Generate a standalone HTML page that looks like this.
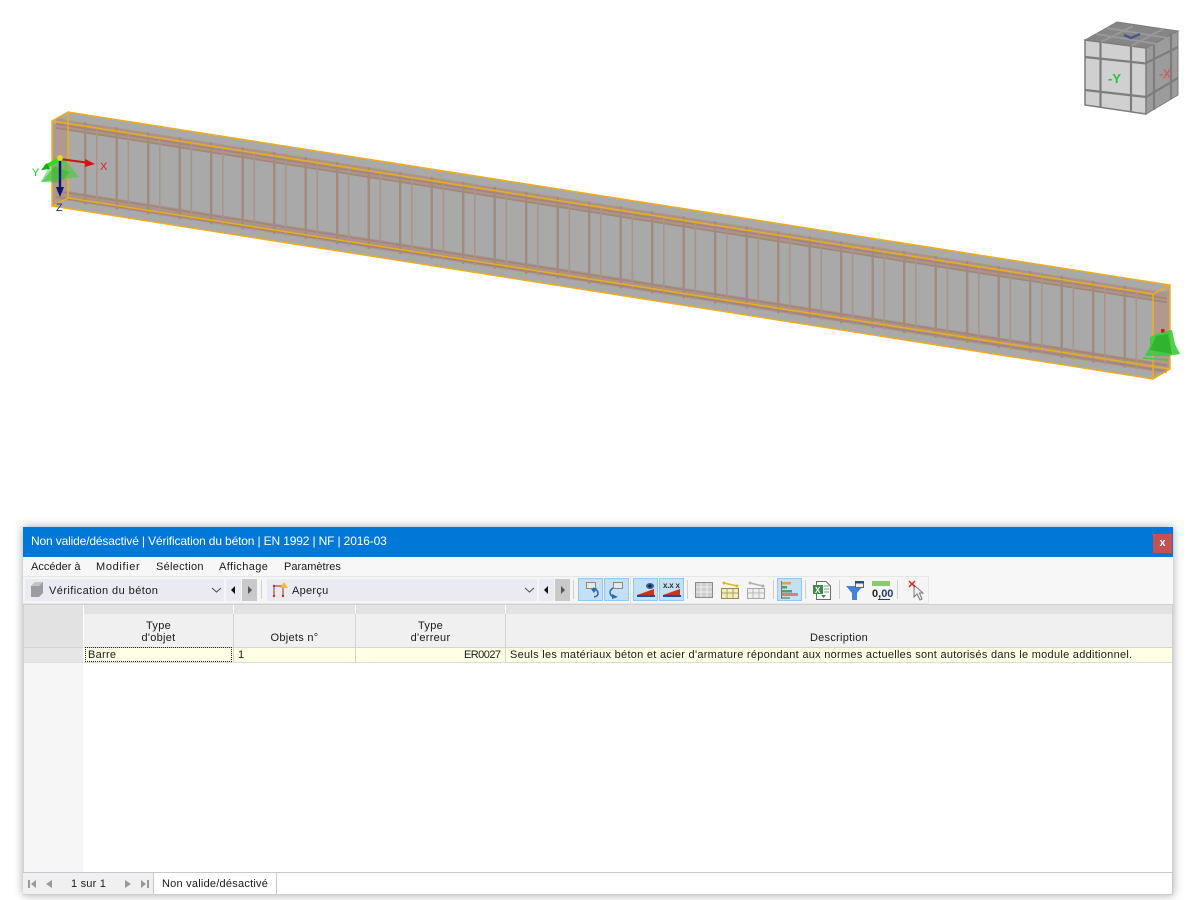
<!DOCTYPE html>
<html><head><meta charset="utf-8"><style>
html,body{margin:0;padding:0;width:1200px;height:900px;overflow:hidden;background:#fff;font-family:"Liberation Sans",sans-serif;color:#1a1a1a}
div{box-sizing:border-box}
.a{position:absolute}
.t{position:absolute;white-space:nowrap;font-size:11px;line-height:13px;letter-spacing:.28px}
.c{text-align:center}
svg{position:absolute;left:0;top:0}
</style></head><body>

<svg width="1200" height="520" viewBox="0 0 1200 520">
<defs>
<pattern id="st" patternUnits="userSpaceOnUse" x="84" y="0" width="31.5" height="520">
<rect x="0" y="0" width="2.4" height="520" fill="#a38a7f"/>
<rect x="12" y="0" width="1.6" height="520" fill="#a8958c"/>
</pattern>
<clipPath id="cp"><polygon points="70,120 1152,290 1152,372 70,202"/></clipPath>
</defs>
<polygon points="52,121 68,112 1170,285 1170,369 1153,379 52,206" fill="#a9a9a9"/>
<polygon points="53,124 68,122 68,198 53,205" fill="#b09a90"/>
<polygon points="1154,295 1169,290 1169,368 1154,376" fill="#b09a90"/>
<!-- rebar bands -->
<g fill="none" stroke-linecap="butt">
<path d="M56,123 L1167,297.500" stroke="#ad9488" stroke-width="9.500"/>
<path d="M56,124 L1167,298.500" stroke="#a08578" stroke-width="1.500"/>
<path d="M56,128 L1167,302.500" stroke="#a08578" stroke-width="1.500"/>
<path d="M56,194 L1167,368.500" stroke="#ad9488" stroke-width="9.500"/>
<path d="M56,191 L1167,365.500" stroke="#a08578" stroke-width="1.500"/>
<path d="M56,197 L1167,371.500" stroke="#a08578" stroke-width="1.500"/>
</g>
<rect x="0" y="100" width="1200" height="300" fill="url(#st)" clip-path="url(#cp)"/>
<!-- box edges -->
<g fill="none" stroke="#f0ad18" stroke-width="1.400">
<path d="M52,121 L68,112 L1170,285 L1170,369 L1153,379 L52,206 Z"/>
<path d="M52,121 L1153,294 L1153,379"/>
<path d="M1153,294 L1170,285"/>
<path d="M68,112 L68,198 L1170,369"/>
<path d="M68,198 L52,206"/>
</g>
<!-- left support -->
<polygon points="63,157 41,182 79,177" fill="#45cc45" opacity=".65"/>
<polygon points="50,165 41,182 60,183 70,172" fill="#2fb52f" opacity=".45"/>
<!-- axes -->
<path d="M60,159 L90,163" stroke="#cc1414" stroke-width="2"/>
<polygon points="85,159 95,164 85,167" fill="#d81212"/>
<path d="M60,159 L45,167" stroke="#22e022" stroke-width="4"/>
<polygon points="41,170 47,163 50,169" fill="#11aa11"/>
<path d="M60,160 L60,190" stroke="#10107a" stroke-width="2.400"/>
<polygon points="56,187 64,187 60,197" fill="#10107a"/>
<circle cx="60" cy="158" r="3" fill="#e8d820"/>
<text x="100" y="170" font-family="Liberation Sans" font-size="11" fill="#e02020">X</text>
<text x="32" y="176" font-family="Liberation Sans" font-size="11" fill="#20c030">Y</text>
<text x="56" y="211" font-family="Liberation Sans" font-size="11" fill="#2030a0">Z</text>
<!-- right support -->
<polygon points="1161,332 1172,330 1175,344 1180,354 1168,356 1145,356 1150,346 1150,337" fill="#3ccc3c" opacity=".9"/>
<polygon points="1156,336 1150,350 1172,354 1168,334" fill="#26ad26" opacity=".7"/>
<path d="M1143,358 L1168,360" stroke="#3ccc3c" stroke-width="1.500"/>
<rect x="1161" y="329" width="3.500" height="3.500" fill="#e81010"/>
<!-- cube -->
<polygon points="1085,40 1117,22 1178,31 1146,48" fill="#868686" stroke="#7c7c7c"/>
<polygon points="1146,48 1178,31 1178,95 1146,114" fill="#9c9c9c" stroke="#7c7c7c"/>
<polygon points="1085,40 1146,48 1146,114 1085,105" fill="#d0d0d0" stroke="#7c7c7c" stroke-width="1.500"/>
<g fill="none" stroke="#7d7d7d" stroke-width="2.200">
<path d="M1100.500,42 V107.500 M1131,46 V112"/>
<path d="M1085,57 L1146,63.500 M1085,90 L1146,97"/>
<path d="M1154,44 V110 M1171,35 V99"/>
<path d="M1146,63 L1178,47 M1146,97 L1178,78"/>
</g>
<g fill="none" stroke="#9a9a9a" stroke-width="1.800">
<path d="M1101,42 L1133,26 M1131,46 L1163,29"/>
<path d="M1096,34 L1157,44 M1107,28 L1168,38"/>
</g>
<text x="1108" y="83" font-family="Liberation Sans" font-size="13" font-weight="bold" fill="#2cc040">-Y</text>
<text x="1159" y="78" font-family="Liberation Sans" font-size="12" font-weight="bold" fill="#c86060">-X</text>
<path d="M1124,35 L1131,38 L1140,34" stroke="#4a5590" stroke-width="2.500" fill="none"/>
</svg>

<!-- window -->
<div class="a" style="left:23px;top:527px;width:1150px;height:368px;background:#fff;box-shadow:0 0 9px rgba(0,0,0,.35)"></div>
<div class="a" style="left:23px;top:527px;width:1150px;height:30px;background:#0078d7"></div>
<div class="t" style="left:31px;top:535px;color:#fff;font-size:12px;letter-spacing:-.15px">Non valide/désactivé | Vérification du béton | EN 1992 | NF | 2016-03</div>
<div class="a" style="left:1153px;top:534px;width:19px;height:19px;background:#c75050;color:#fff;font-size:11px;line-height:19px;text-align:center;font-weight:bold">x</div>
<div class="a" style="left:23px;top:557px;width:1150px;height:47px;background:#f7f7f7"></div>
<div class="t" style="left:31px;top:561px;letter-spacing:0">Accéder à</div>
<div class="t" style="left:96px;top:561px;letter-spacing:.65px">Modifier</div>
<div class="t" style="left:156px;top:561px">Sélection</div>
<div class="t" style="left:219px;top:561px;letter-spacing:.4px">Affichage</div>
<div class="t" style="left:284px;top:561px;letter-spacing:0">Paramètres</div>

<!-- toolbar -->
<div class="a" style="left:23px;top:576px;width:906px;height:28px;border:1px solid #e6e6e6;border-left:0;background:#f5f5f5"></div>
<div class="a" style="left:25px;top:579px;width:199px;height:22px;background:#e9eaf2"></div>
<div class="a" style="left:226px;top:579px;width:15px;height:22px;background:#e9eaf2"></div>
<div class="a" style="left:242px;top:579px;width:15px;height:22px;background:#c9c9c9"></div>
<div class="a" style="left:261px;top:580px;width:1px;height:19px;background:#cfcfcf"></div>
<div class="a" style="left:267px;top:579px;width:270px;height:22px;background:#e9eaf2"></div>
<div class="a" style="left:539px;top:579px;width:15px;height:22px;background:#e9eaf2"></div>
<div class="a" style="left:555px;top:579px;width:15px;height:22px;background:#c9c9c9"></div>
<div class="a" style="left:573px;top:580px;width:1px;height:19px;background:#cfcfcf"></div>
<div class="a" style="left:630px;top:577px;width:1px;height:26px;background:#dcdcdc"></div>
<div class="a" style="left:687px;top:580px;width:1px;height:19px;background:#cfcfcf"></div>
<div class="a" style="left:773px;top:580px;width:1px;height:19px;background:#cfcfcf"></div>
<div class="a" style="left:805px;top:580px;width:1px;height:19px;background:#cfcfcf"></div>
<div class="a" style="left:839px;top:580px;width:1px;height:19px;background:#cfcfcf"></div>
<div class="a" style="left:897px;top:580px;width:1px;height:19px;background:#cfcfcf"></div>
<div class="a" style="left:578px;top:578px;width:25px;height:23px;background:#c4e0f8;border:1px solid #90c8f5"></div>
<div class="a" style="left:604px;top:578px;width:25px;height:23px;background:#c4e0f8;border:1px solid #90c8f5"></div>
<div class="a" style="left:633px;top:578px;width:25px;height:23px;background:#c4e0f8;border:1px solid #90c8f5"></div>
<div class="a" style="left:659px;top:578px;width:25px;height:23px;background:#c4e0f8;border:1px solid #90c8f5"></div>
<div class="a" style="left:777px;top:578px;width:25px;height:23px;background:#c4e0f8;border:1px solid #90c8f5"></div>
<div class="t" style="left:49px;top:585px;letter-spacing:.43px">Vérification du béton</div>
<div class="t" style="left:292px;top:585px">Aperçu</div>

<svg width="1200" height="900" viewBox="0 0 1200 900" style="pointer-events:none">
<!-- combo1 icon -->
<polygon points="31,586 35,582 43,582 43,593 39,597 31,597" fill="#9c9c9c"/>
<polygon points="31,586 35,582 43,582 39,586" fill="#c4c4c4"/>
<!-- chevrons and arrows -->
<path d="M212,588 L216.500,592 L221,588" fill="none" stroke="#555" stroke-width="1.100"/>
<path d="M525,588 L529.500,592 L534,588" fill="none" stroke="#555" stroke-width="1.100"/>
<polygon points="235,586 231,590 235,594" fill="#111"/>
<polygon points="248,586 252,590 248,594" fill="#555"/>
<polygon points="548,586 544,590 548,594" fill="#111"/>
<polygon points="561,586 565,590 561,594" fill="#555"/>
<!-- aperçu icon -->
<path d="M274,596 V586 H283 V596" fill="none" stroke="#8a5a50" stroke-width="1.200"/>
<circle cx="274" cy="586" r="1.200" fill="#c03020"/><circle cx="274" cy="596" r="1.200" fill="#c03020"/><circle cx="283" cy="596" r="1.200" fill="#c03020"/>
<polygon points="280,588 284,582 288,588" fill="#f0c020"/>
<!-- blue button icons -->
<rect x="586.500" y="582.500" width="9" height="6" fill="#e8e8e8" stroke="#888"/>
<path d="M593,588 C600,591 599,596 594,597" fill="none" stroke="#2a6aa8" stroke-width="1.600"/>
<polygon points="591,589 597,588 594,593" fill="#2a6aa8"/>
<rect x="613.500" y="582.500" width="9" height="6" fill="#e8e8e8" stroke="#888"/>
<path d="M613,588 C608,591 610,596 614,597" fill="none" stroke="#2a6aa8" stroke-width="1.600"/>
<polygon points="612,594 618,597 612,599" fill="#2a6aa8"/>
<polygon points="637,595 654,589 654,595" fill="#d03020"/>
<rect x="637" y="595" width="18" height="2" fill="#1e4f96"/>
<ellipse cx="650" cy="586" rx="4" ry="3" fill="#2a5fa8"/>
<circle cx="650" cy="586" r="1.500" fill="#222"/>
<polygon points="663,595 680,589 680,595" fill="#d03020"/>
<rect x="663" y="595" width="18" height="2" fill="#1e4f96"/>
<text x="663" y="588" font-family="Liberation Sans" font-size="8" font-weight="bold" fill="#333" textLength="17" lengthAdjust="spacing">x.x x</text>
<!-- table icons -->
<g stroke="#8a8a8a" fill="#cfcfcf">
<rect x="695.500" y="582.500" width="17" height="15"/>
<path d="M696,587 H712 M696,592 H712 M701,583 V597 M707,583 V597" fill="none" stroke="#eee"/>
<rect x="721.500" y="588.500" width="17" height="10" fill="#f5eeb0" stroke="#8a8a6a"/>
<path d="M722,593 H738 M727,589 V598 M733,589 V598" fill="none" stroke="#a8a070"/>
<rect x="747.500" y="588.500" width="17" height="10" fill="#eeeeee" stroke="#a8a8a8"/>
<path d="M748,593 H764 M753,589 V598 M759,589 V598" fill="none" stroke="#b8b8b8"/>
</g>
<path d="M724,583 L737,586" stroke="#e4b818" stroke-width="1.500"/>
<circle cx="724" cy="583" r="1.500" fill="#e4b818"/><circle cx="737" cy="586" r="1.500" fill="#e4b818"/>
<path d="M750,583 L763,586" stroke="#b0b0b0" stroke-width="1.500"/>
<circle cx="750" cy="583" r="1.500" fill="#b0b0b0"/><circle cx="763" cy="586" r="1.500" fill="#b0b0b0"/>
<!-- bars icon -->
<path d="M781.500,581 V599" stroke="#777" stroke-width="1"/>
<rect x="782" y="582" width="9" height="2.500" fill="#e8a040"/>
<rect x="782" y="586" width="5" height="2.500" fill="#50a060"/>
<rect x="782" y="590" width="10" height="2.500" fill="#50a060"/>
<rect x="782" y="593" width="16" height="3" fill="#d08080"/>
<rect x="782" y="597" width="8" height="2" fill="#80b080"/>
<!-- excel -->
<polygon points="816.500,581.500 826,581.500 830.500,586 830.500,599.500 816.500,599.500" fill="#fafafa" stroke="#6a6a6a"/>
<rect x="813" y="585" width="10" height="9" fill="#3f8a4e"/>
<text x="815" y="593" font-family="Liberation Sans" font-size="8" font-weight="bold" fill="#fff">X</text>
<path d="M824,586 H829 M824,589 H829 M824,592 H829" stroke="#6aaa7a"/>
<path d="M821,595 h5 l-2.500,3 z" fill="#3f8a4e"/>
<!-- funnel -->
<polygon points="846,586 863,586 857,593 857,600 852,600 852,593" fill="#3d88d0"/>
<rect x="855.500" y="581.500" width="8" height="6" fill="#f0f0f0" stroke="#666"/>
<rect x="855" y="581" width="9" height="2.500" fill="#304a78"/>
<!-- 0,00 -->
<rect x="872" y="581" width="18" height="5" fill="#8cc870"/>
<text x="872" y="597" font-family="Liberation Sans" font-size="11" font-weight="bold" fill="#222">0,<tspan fill="#223a7a">00</tspan></text>
<path d="M878,599.500 H890" stroke="#223a7a"/>
<!-- cursor -->
<polygon points="914,585 914,597 917,594 920,600 922,599 919.500,593 923,593" fill="#eee" stroke="#777"/>
<path d="M909,581 L915,587 M915,581 L909,587" stroke="#e02020" stroke-width="1.400"/>
</svg>

<!-- table -->
<div class="a" style="left:23px;top:604px;width:1150px;height:1px;background:#cfcfcf"></div>
<div class="a" style="left:24px;top:605px;width:1148px;height:9px;background:#e2e2e2"></div>
<div class="a" style="left:24px;top:614px;width:1148px;height:33px;background:#f0f0f0"></div>
<div class="a" style="left:24px;top:614px;width:59px;height:33px;background:#e2e2e2"></div>
<div class="a" style="left:24px;top:647px;width:59px;height:225px;background:#f6f6f6"></div>
<div class="a" style="left:24px;top:647px;width:59px;height:15px;background:#e6e6e6"></div>
<div class="a" style="left:84px;top:647px;width:1088px;height:15px;background:#ffffe6"></div>
<div class="a" style="left:24px;top:647px;width:1148px;height:1px;background:#d4d4d4"></div>
<div class="a" style="left:24px;top:662px;width:1148px;height:1px;background:#dcdcdc"></div>
<div class="a" style="left:83px;top:605px;width:1px;height:58px;background:#fff"></div>
<div class="a" style="left:233px;top:605px;width:1px;height:58px;background:#fff"></div>
<div class="a" style="left:355px;top:605px;width:1px;height:58px;background:#fff"></div>
<div class="a" style="left:505px;top:605px;width:1px;height:58px;background:#fff"></div>
<div class="a" style="left:233px;top:614px;width:1px;height:49px;background:#d4d4d4"></div>
<div class="a" style="left:355px;top:614px;width:1px;height:49px;background:#d4d4d4"></div>
<div class="a" style="left:505px;top:614px;width:1px;height:49px;background:#d4d4d4"></div>
<div class="a" style="left:1172px;top:605px;width:1px;height:267px;background:#cfcfd6"></div>
<div class="a" style="left:23px;top:605px;width:1px;height:267px;background:#cfcfd6"></div>

<div class="t c" style="left:84px;top:620px;width:149px">Type</div>
<div class="t c" style="left:84px;top:632px;width:149px">d'objet</div>
<div class="t c" style="left:234px;top:632px;width:121px">Objets n°</div>
<div class="t c" style="left:356px;top:620px;width:149px">Type</div>
<div class="t c" style="left:356px;top:632px;width:149px">d'erreur</div>
<div class="t c" style="left:506px;top:632px;width:666px">Description</div>
<div class="a" style="left:85px;top:647px;width:147px;height:15px;border:1px dotted #222"></div>
<div class="t" style="left:88px;top:649px">Barre</div>
<div class="t" style="left:238px;top:649px">1</div>
<div class="t" style="left:464px;top:649px;letter-spacing:-.55px">ER0027</div>
<div class="t" style="left:510px;top:649px">Seuls les matériaux béton et acier d'armature répondant aux normes actuelles sont autorisés dans le module additionnel.</div>

<!-- tab bar -->
<div class="a" style="left:23px;top:872px;width:1150px;height:23px;background:#fff;border-top:1px solid #c8c8d0;border-bottom:1px solid #d0d0d0;border-right:1px solid #c8c8d0"></div>
<div class="a" style="left:23px;top:873px;width:131px;height:21px;background:#f0f0f0;border-right:1px solid #c8c8d0"></div>
<div class="a" style="left:276px;top:873px;width:1px;height:21px;background:#c8c8d0"></div>
<div class="t" style="left:71px;top:878px;letter-spacing:.2px">1 sur 1</div>
<div class="t" style="left:162px;top:878px;letter-spacing:.23px">Non valide/désactivé</div>
<svg width="1200" height="900" viewBox="0 0 1200 900" style="pointer-events:none">
<g fill="#999">
<rect x="28" y="880" width="2" height="8"/><polygon points="36,880 31,884 36,888"/>
<polygon points="52,880 46,884 52,888"/>
<polygon points="125,880 131,884 125,888"/>
<polygon points="141,880 146,884 141,888"/><rect x="147" y="880" width="2" height="8"/>
</g>
</svg>
</body></html>
